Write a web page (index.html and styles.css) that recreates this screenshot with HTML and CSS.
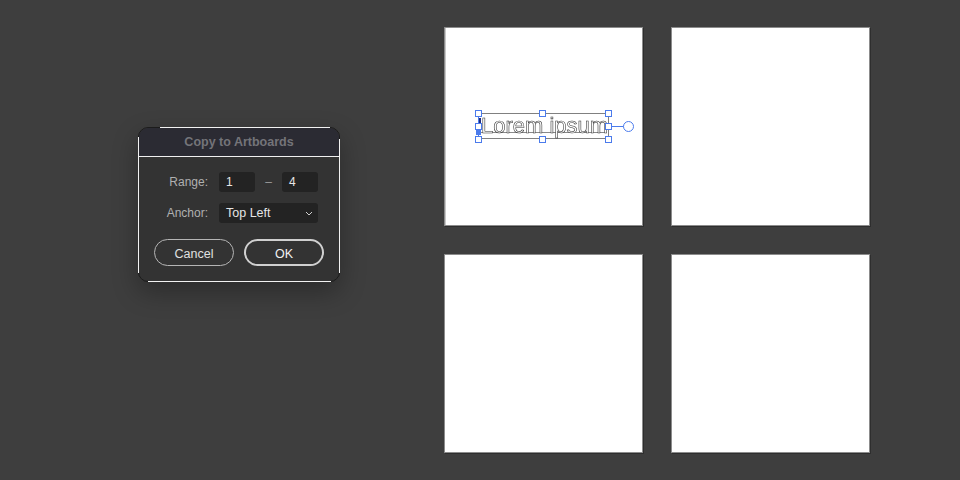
FILE: index.html
```html
<!DOCTYPE html>
<html>
<head>
<meta charset="utf-8">
<link rel="stylesheet" href="styles.css">
</head>
<body>
<div class="page">
  <div class="dialog">
    <div class="title">Copy to Artboards</div>
    <div class="form">
      <div class="label">Range:</div>
      <div class="range">
        <div class="field">1</div>
        <div class="dash">–</div>
        <div class="field">4</div>
      </div>
      <div class="label">Anchor:</div>
      <div class="field select">
        <span>Top Left</span>
        <svg class="chev" width="8" height="5" viewBox="0 0 8 5"><path d="M1 1 L4 4 L7 1" fill="none" stroke="#cfcfcf" stroke-width="1"/></svg>
      </div>
    </div>
    <div class="buttons">
      <div class="btn">Cancel</div>
      <div class="btn ok">OK</div>
    </div>
    <span class="edge top"></span>
    <span class="edge bottom"></span>
    <span class="edge left"></span>
    <span class="edge right"></span>
  </div>
  <div class="boards">
    <div class="board first">
      <div class="textobj">
        <div class="baseline"></div>
        <svg class="lorem" width="130" height="30" viewBox="0 0 130 30"><text x="1" y="20" font-family="Liberation Sans, Arial, sans-serif" font-size="22" fill="#ffffff" stroke="#2e2e2e" stroke-width="0.55">Lorem ipsum</text></svg>
        <span class="caret"></span>
        <span class="h tl"></span><span class="h tm"></span><span class="h tr"></span>
        <span class="h ml"></span><span class="h mr"></span>
        <span class="h bl"></span><span class="h bm"></span><span class="h br"></span>
        <span class="anchor-dot"></span>
        <span class="stem"></span>
        <span class="knob"></span>
      </div>
    </div>
    <div class="board"></div>
    <div class="board"></div>
    <div class="board"></div>
  </div>
</div>
</body>
</html>
```
FILE: styles.css
```css
html, body {
  margin: 0;
  padding: 0;
  background: #3e3e3e;
  width: 960px;
  height: 480px;
  overflow: hidden;
  font-family: "Liberation Sans", Arial, sans-serif;
}
.page {
  display: flex;
  align-items: flex-start;
}
.dialog {
  position: relative;
  margin: 127px 0 0 138px;
  width: 200px;
  height: 153px;
  border: 1px solid #1c1c1c;
  border-radius: 10px;
  background: #333333;
  box-shadow: 0 10px 26px rgba(0,0,0,0.3);
  display: flex;
  flex-direction: column;
}
.edge {
  position: absolute;
  background: #f2f2f2;
}
.edge.top { top: -1px; left: 21px; width: 170px; height: 1px; }
.edge.bottom { bottom: -1px; left: 9px; width: 183px; height: 1px; }
.edge.left { left: -1px; top: 9px; width: 1px; height: 136px; }
.edge.right { right: -1px; top: 11px; width: 1px; height: 134px; }
.title {
  height: 28px;
  background: #2b2b33;
  border-bottom: 1px solid #f0f0f0;
  border-radius: 9px 9px 0 0;
  color: #747479;
  font-weight: bold;
  font-size: 12.5px;
  text-align: center;
  line-height: 28px;
}
.form {
  display: grid;
  grid-template-columns: 69px 99px;
  grid-auto-rows: 20px;
  column-gap: 11px;
  row-gap: 11px;
  margin-top: 15px;
  align-items: center;
}
.label {
  text-align: right;
  color: #b0b0b0;
  font-size: 12px;
}
.range {
  display: flex;
  align-items: center;
  justify-content: space-between;
  height: 20px;
}
.field {
  width: 36px;
  height: 20px;
  box-sizing: border-box;
  background: #232323;
  border-radius: 3px;
  color: #e6e6e6;
  font-size: 12px;
  line-height: 21px;
  padding-left: 7px;
}
.dash {
  color: #9a9a9a;
  font-size: 12px;
}
.select {
  width: 99px;
  display: flex;
  align-items: center;
  justify-content: space-between;
  padding-right: 5px;
  font-size: 12.5px;
}
.chev { display: block; }
.buttons {
  display: flex;
  gap: 10px;
  margin: 16px 0 0 15px;
}
.btn {
  width: 80px;
  height: 27px;
  box-sizing: border-box;
  border: 1px solid #b5b5b5;
  border-radius: 14px;
  color: #e0e0e0;
  font-size: 12.5px;
  text-align: center;
  line-height: 25px;
  padding-top: 2px;
}
.btn.ok {
  border: 2px solid #d0d0d0;
  line-height: 23px;
  color: #f2f2f2;
}
.boards {
  margin: 27px 0 0 104px;
  display: grid;
  grid-template-columns: repeat(2, 199px);
  grid-template-rows: repeat(2, 199px);
  gap: 28px;
}
.board {
  position: relative;
  background: #ffffff;
  border: 1px solid #8c8c8c;
  box-sizing: border-box;
  box-shadow: 1px 1px 0 #2e2e2e;
}
.board.first {
  box-shadow: 1px 1px 0 #2e2e2e, inset 1px 0 0 #c8c8c8;
}
.textobj {
  position: absolute;
  left: 33px;
  top: 85px;
  width: 131px;
  height: 26px;
  box-sizing: border-box;
  border: 1px solid #808080;
  border-left-color: #4b7bec;
}
.baseline {
  position: absolute;
  left: 0;
  right: 2px;
  top: 18px;
  height: 1px;
  background: #8a8a8a;
}
.lorem {
  position: absolute;
  left: 1px;
  top: -1px;
  display: block;
  will-change: transform;
  transform: translateZ(0);
}
.caret {
  position: absolute;
  left: 0;
  top: 4px;
  width: 2px;
  height: 12px;
  background: #1c2a80;
}
.h {
  position: absolute;
  width: 5px;
  height: 5px;
  background: #fff;
  border: 1px solid #4b7bec;
}
.tl { left: -4px; top: -4px; }
.tm { left: 60px; top: -4px; }
.tr { left: 126px; top: -4px; }
.ml { left: -4px; top: 9px; }
.mr { left: 126px; top: 9px; }
.bl { left: -4px; top: 22px; }
.bm { left: 60px; top: 22px; }
.br { left: 126px; top: 22px; }
.anchor-dot {
  position: absolute;
  left: -3px;
  top: 16px;
  width: 5px;
  height: 5px;
  background: #4b7bec;
}
.stem {
  position: absolute;
  left: 133px;
  top: 12px;
  width: 12px;
  height: 1px;
  background: #4b7bec;
}
.knob {
  position: absolute;
  left: 144px;
  top: 7px;
  width: 9px;
  height: 9px;
  border: 1px solid #4b7bec;
  border-radius: 50%;
  background: #fff;
}
```
